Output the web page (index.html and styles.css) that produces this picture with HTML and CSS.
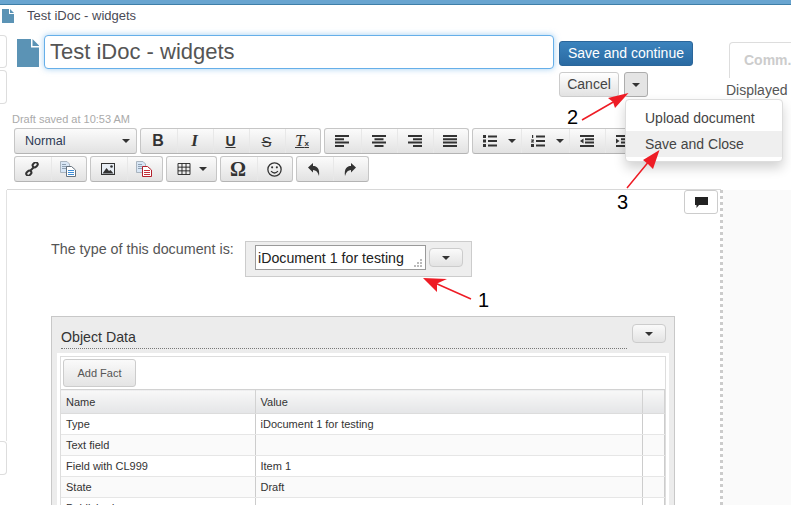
FILE: index.html
```html
<!DOCTYPE html>
<html>
  <head>
    <meta name="viewport" content="width=device-width, initial-scale=1.0">
    <title>Test iDoc - widgets</title>
    <link rel="stylesheet" href="styles.css">
  </head>
  <body>
    <div class="page">
      <div class="topbar"></div>
      <div class="titlebar">
        <svg class="doc-small" viewBox="0 0 12 14"><path d="M0 0H7V5H12V14H0Z"/><path d="M8 0L12 4H8Z"/></svg>
        <span>Test iDoc - widgets</span>
      </div>

      <div class="head">
        <div class="rail">
          <div class="rail-box"></div>
          <div class="rail-box"></div>
        </div>
        <div class="head-main">
          <div class="title-row">
            <svg class="doc-big" viewBox="0 0 22 28"><path d="M0 0H14V8.500H22V28H0Z"/><path d="M15.500 0L22 6.500V7H15.500Z"/></svg>
            <input class="title-input" type="text" value="Test iDoc - widgets">
            <div class="actions">
              <button class="btn btn-primary">Save and continue</button>
              <div class="actions-row">
                <button class="btn btn-cancel">Cancel</button>
                <button class="btn btn-caret"><i class="caret"></i></button>
              </div>
              <div class="menu">
                <a>Upload document</a>
                <a class="active">Save and Close</a>
              </div>
            </div>
          </div>
          <div class="draft">Draft saved at 10:53 AM</div>

          <div class="toolbar">
            <div class="group"><div class="tool tool-select"><span>Normal</span><i class="caret"></i></div></div>
            <div class="group">
              <div class="tool tb">B</div>
              <div class="tool ti">I</div>
              <div class="tool tu">U</div>
              <div class="tool ts">S</div>
              <div class="tool"><span class="tx">T<small>x</small></span></div>
            </div>
            <div class="group">
              <div class="tool"><svg class="ico" viewBox="0 0 14 12"><path d="M0 0H14V2H0ZM0 3.300H9V5.300H0ZM0 6.600H14V8.600H0ZM0 10H9V12H0Z"/></svg></div>
              <div class="tool"><svg class="ico" viewBox="0 0 14 12"><path d="M0 0H14V2H0ZM2.500 3.300H11.500V5.300H2.500ZM0 6.600H14V8.600H0ZM2.500 10H11.500V12H2.500Z"/></svg></div>
              <div class="tool"><svg class="ico" viewBox="0 0 14 12"><path d="M0 0H14V2H0ZM5 3.300H14V5.300H5ZM0 6.600H14V8.600H0ZM5 10H14V12H5Z"/></svg></div>
              <div class="tool"><svg class="ico" viewBox="0 0 14 12"><path d="M0 0H14V2H0ZM0 3.300H14V5.300H0ZM0 6.600H14V8.600H0ZM0 10H14V12H0Z"/></svg></div>
            </div>
            <div class="group">
              <div class="tool tool-wide"><svg class="ico" viewBox="0 0 14 12"><path d="M0 0H3V3H0ZM5 .5H14V2.500H5ZM0 4.500H3V7.500H0ZM5 5H14V7H5ZM0 9H3V12H0ZM5 9.500H14V11.500H5Z"/></svg><i class="caret"></i></div>
              <div class="tool tool-wide"><svg class="ico" viewBox="0 0 14 12"><path d="M1 0H2.200V3H1ZM0 4.500H3V5.500L1.500 6.500H3V7.500H0V6.700L1.500 5.500H0ZM0 9H3V12H0ZM5 .5H14V2.500H5ZM5 5H14V7H5ZM5 9.500H14V11.500H5Z"/></svg><i class="caret"></i></div>
              <div class="tool"><svg class="ico" viewBox="0 0 14 12"><path d="M0 0H14V2H0ZM5 3.300H14V5.300H5ZM5 6.600H14V8.600H5ZM0 10H14V12H0ZM3.500 3.500V8.500L0 6Z"/></svg></div>
              <div class="tool"><svg class="ico" viewBox="0 0 14 12"><path d="M0 0H14V2H0ZM5 3.300H14V5.300H5ZM5 6.600H14V8.600H5ZM0 10H14V12H0ZM0 3.500V8.500L3.500 6Z"/></svg></div>
              <div class="tool"></div>
            </div>
          </div>

          <div class="toolbar">
            <div class="group">
              <div class="tool"><svg class="ico ico-link" viewBox="0 0 14 14"><g fill="none" stroke="#333" stroke-width="2"><rect x="7.500" y="1" width="5.500" height="4" rx="2" transform="rotate(-45 10 3)"/><rect x="1" y="9" width="5.500" height="4" rx="2" transform="rotate(-45 4 11)"/><path d="M5.500 8.500L8.500 5.500"/></g></svg></div>
              <div class="tool"><svg class="ico ico-page" viewBox="0 0 16 16"><path d="M.5 .5H7L9.500 3V11.500H.5Z" fill="#d8e6f5" stroke="#a9b4bf"/><path d="M2 3.500H6M2 5.500H8M2 7.500H8" stroke="#8ea0b2"/><path d="M6.500 5.500H11.500L15.500 9V15.500H6.500Z" fill="#fff" stroke="#66727e"/><path d="M8 9.500H14M8 11.500H14M8 13.500H14" stroke="#3d8cd6"/></svg></div>
            </div>
            <div class="group">
              <div class="tool"><svg class="ico" viewBox="0 0 14 12"><path d="M0 0H14V12H0Z"/><path d="M1 1H13V11H1Z" fill="#e8eef5"/><path d="M1.500 10.500L5.500 5L8 8L9.500 7L12.500 10.500Z"/><circle cx="10.500" cy="3.500" r="1.300"/></svg></div>
              <div class="tool"><svg class="ico ico-page" viewBox="0 0 16 16"><path d="M.5 .5H7L9.500 3V11.500H.5Z" fill="#d8e6f5" stroke="#a9b4bf"/><path d="M2 3.500H6M2 5.500H8M2 7.500H8" stroke="#8ea0b2"/><path d="M6.500 5.500H11.500L15.500 9V15.500H6.500Z" fill="#fff" stroke="#b3202c"/><path d="M8 9.500H14M8 11.500H14M8 13.500H14" stroke="#c4303a"/></svg></div>
            </div>
            <div class="group">
              <div class="tool tool-table"><svg class="ico" viewBox="0 0 14 13"><path d="M.5 .5H13.500V12.500H.5ZM.5 4.500H13.500M.5 8.500H13.500M4.800 .5V12.500M9.200 .5V12.500" fill="none" stroke="#222"/></svg><i class="caret"></i></div>
            </div>
            <div class="group">
              <div class="tool tomega">&#937;</div>
              <div class="tool"><svg class="ico ico-smile" viewBox="0 0 14 14"><g fill="none" stroke="#333" stroke-width="1.200"><circle cx="7" cy="7" r="6.200"/><path d="M3.800 8.500Q7 12 10.200 8.500"/></g><circle cx="4.800" cy="5" r="1" fill="#333"/><circle cx="9.200" cy="5" r="1" fill="#333"/></svg></div>
            </div>
            <div class="group">
              <div class="tool"><svg class="ico ico-turn" viewBox="0 0 12 13"><path d="M0 4.500L5 0V3C9 3 12 5.500 11 13C10 9 8 7 5 7V9.500Z"/></svg></div>
              <div class="tool"><svg class="ico ico-turn" viewBox="0 0 12 13"><path d="M12 4.500L7 0V3C3 3 0 5.500 1 13C2 9 4 7 7 7V9.500Z"/></svg></div>
            </div>
          </div>
        </div>
        <div class="head-side">
          <div class="tab">Comm.</div>
          <div class="displayed">Displayed</div>
        </div>
      </div>

      <div class="body">
        <div class="rail rail-long"><div class="rail-box rail-box-low"></div></div>
        <div class="content">
          <div class="comment-row">
            <button class="btn-comment"><svg viewBox="0 0 13 11"><path d="M0 0H13V8H4L1.500 11V8H0Z" fill="#222"/></svg></button>
          </div>
          <div class="type-row">
            <div class="type-label">The type of this document is:</div>
            <div class="type-widget">
              <div class="type-value">iDocument 1 for testing<svg class="grip" viewBox="0 0 8 8"><path d="M6 0H8V2H6ZM3 3H5V5H3ZM6 3H8V5H6ZM0 6H2V8H0ZM3 6H5V8H3ZM6 6H8V8H6Z"/></svg></div>
              <button class="btn-small"><i class="caret"></i></button>
            </div>
          </div>

          <div class="panel">
            <div class="panel-head">
              <div class="panel-title">Object Data</div>
              <button class="btn-small"><i class="caret"></i></button>
            </div>
            <div class="panel-body">
              <div class="grid">
                <div class="grid-bar"><button class="btn-fact">Add Fact</button></div>
                <table>
                  <thead>
                    <tr><th class="col-name">Name</th><th>Value</th><th class="col-end"></th></tr>
                  </thead>
                  <tbody>
                    <tr><td>Type</td><td>iDocument 1 for testing</td><td></td></tr>
                    <tr><td>Text field</td><td></td><td></td></tr>
                    <tr><td>Field with CL999</td><td>Item 1</td><td></td></tr>
                    <tr><td>State</td><td>Draft</td><td></td></tr>
                    <tr><td>Published</td><td></td><td></td></tr>
                  </tbody>
                </table>
              </div>
            </div>
          </div>
        </div>
        <div class="divider"></div>
        <div class="side"></div>
      </div>

      <svg class="arrows" viewBox="0 0 791 505">
        <path d="M582 120L615 101M627 188L650 160M471 299L435 283" fill="none" stroke="#ee1c25" stroke-width="1.500"/>
        <path d="M628.500 93L608 98L613 102L615 108Z"/>
        <path d="M659.500 150L643 160L648 164L653 169Z"/>
        <path d="M423 278L447 279L437 283.500L437 292Z"/>
      </svg>
      <span class="note note-1">1</span>
      <span class="note note-2">2</span>
      <span class="note note-3">3</span>
    </div>
  </body>
</html>
```

FILE: styles.css
```css
* {
  box-sizing: border-box;
}

html, body {
  margin: 0;
  height: 100%;
  overflow: hidden;
}

body {
  background-color: #fff;
  color: #555;
  font-family: "Liberation Sans", Arial, sans-serif;
  font-size: 13px;
}

.page {
  position: relative;
  width: 791px;
  height: 505px;
  overflow: hidden;
}

.topbar {
  height: 5px;
  background-color: #69a5d0;
  border-bottom: 1px solid #3f7fa8;
}

.titlebar {
  display: flex;
  align-items: center;
  height: 24px;
  padding: 0 0 3px 2px;
  color: #4a4a55;
}

.doc-small {
  width: 12px;
  height: 14px;
  margin-right: 13px;
  fill: #5b93b5;
}

/* Head: title, buttons and toolbars */
.head {
  display: flex;
  height: 161px;
}

.rail {
  flex: none;
  width: 7px;
}

.rail-box {
  height: 33px;
  margin-top: 6px;
  border: 1px solid #ddd;
  border-left: none;
  border-radius: 0 4px 4px 0;
}

.rail-box + .rail-box {
  height: 34px;
  margin-top: 2px;
}

.head-main {
  flex: none;
  width: 714px;
  padding-top: 6px;
  border-bottom: 1px solid #d8d8d8;
}

.title-row {
  display: flex;
  align-items: flex-start;
  height: 62px;
  padding-left: 10px;
}

.doc-big {
  flex: none;
  width: 22px;
  height: 28px;
  margin: 4px 5px 0 0;
  fill: #5b93b5;
}

.title-input {
  flex: none;
  width: 510px;
  height: 34px;
  padding: 0 5px;
  color: #555;
  font-family: inherit;
  font-size: 22px;
  border: 1px solid #66afe9;
  border-radius: 4px;
  box-shadow: 0 0 6px rgba(102, 175, 233, 0.6);
  outline: none;
}

.actions {
  position: relative;
  flex: none;
  margin: 6px 0 0 5px;
}

.btn {
  height: 25px;
  padding: 0 0 2px;
  color: #444;
  font-family: inherit;
  font-size: 14px;
  border: 1px solid #ccc;
  border-radius: 3px;
  background: linear-gradient(#fff, #e2e2e2);
}

.btn-primary {
  display: block;
  width: 134px;
  color: #fff;
  border-color: #2b669a;
  background: linear-gradient(#3b83bd, #2a6aa2);
}

.actions-row {
  display: flex;
  gap: 5px;
  margin-top: 6px;
}

.btn-cancel {
  width: 60px;
}

.btn-caret {
  width: 24px;
  border-color: #adadad;
  background: #e4e4e4;
}

.caret {
  display: inline-block;
  width: 0;
  height: 0;
  border-top: 4px solid #333;
  border-left: 4px solid transparent;
  border-right: 4px solid transparent;
  vertical-align: middle;
}

.menu {
  position: absolute;
  z-index: 2;
  left: 66px;
  top: 58px;
  width: 158px;
  padding: 5px 0 4px;
  background-color: #fff;
  border: 1px solid #ddd;
  border-radius: 4px;
  box-shadow: 0 6px 12px rgba(0, 0, 0, 0.18);
  font-size: 14px;
  color: #444;
}

.menu a {
  display: block;
  height: 26px;
  padding: 0 19px;
  line-height: 26px;
}

.menu a.active {
  background-color: #efefef;
}

.draft {
  height: 31px;
  padding: 16px 0 0 5px;
  color: #aaa;
  font-size: 11px;
  line-height: 12px;
}

/* Editor toolbar */
.toolbar {
  display: flex;
  gap: 3px;
  height: 26px;
  margin: 0 0 2px 7px;
}

.group {
  display: flex;
  flex: none;
  height: 26px;
  border: 1px solid #c6c6c6;
  border-bottom-color: #b4b4b4;
  border-radius: 3px;
  background: linear-gradient(#fbfbfb, #e2e2e2);
}

.tool {
  display: flex;
  align-items: center;
  justify-content: center;
  width: 36px;
  padding-right: 2px;
  color: #333;
  border-left: 1px solid #e8e8e8;
}

.tool:first-child {
  border-left: none;
}

.tool:last-child {
  width: 35px;
}

.group .tool-select {
  justify-content: space-between;
  width: 121px;
  padding: 0 6px 0 10px;
  color: #2d3a55;
  font-size: 12.600px;
}

.tool-wide {
  gap: 11px;
  width: 48px;
  padding: 0 0 0 4px;
}

.group .tool-table {
  gap: 8px;
  width: 49px;
  padding: 0;
}

.ico {
  width: 14px;
  height: 12px;
  fill: #333;
}

.ico-page {
  width: 16px;
  height: 16px;
}

.ico-link {
  height: 14px;
}

.ico-smile {
  width: 15px;
  height: 15px;
}

.ico-turn {
  width: 12px;
  height: 13px;
}

.tb {
  font: bold 16px "Liberation Sans", sans-serif;
}

.ti {
  font: italic bold 17px "Liberation Serif", serif;
}

.tu {
  font-size: 14px;
  font-weight: bold;
  text-decoration: underline;
}

.ts {
  font-size: 15px;
  text-decoration: line-through;
}

.tx {
  font: italic 17px "Liberation Serif", serif;
  text-decoration: underline;
}

.tx small {
  font: bold 8px "Liberation Sans", sans-serif;
}

.tomega {
  font: bold 20px "Liberation Serif", serif;
}

/* Body: document area and side panel */
.body {
  display: flex;
  height: 315px;
}

.rail-long {
  height: 251px;
  border-right: 1px solid #e2e2e2;
}

.rail-box-low {
  width: 7px;
  height: 34px;
  margin-top: 251px;
}

.content {
  flex: none;
  width: 713px;
}

.divider {
  flex: none;
  width: 3px;
  border-left: 3px dotted #ccc;
}

.side {
  flex: 1;
  background-color: #fafafa;
}

.head-side {
  flex: 1;
  padding: 13px 0 0 5px;
  overflow: hidden;
}

.tab {
  width: 70px;
  height: 36px;
  margin-left: 3px;
  padding: 9px 0 0 14px;
  color: #ccc;
  font-size: 14px;
  font-weight: bold;
  border: 1px solid #ddd;
  border-bottom: none;
  border-radius: 4px 4px 0 0;
}

.displayed {
  padding-top: 4px;
  color: #555;
  font-size: 14px;
  white-space: nowrap;
}

.comment-row {
  display: flex;
  justify-content: flex-end;
  height: 51px;
  padding: 0 2px 0 0;
}

.btn-comment {
  display: flex;
  align-items: center;
  justify-content: center;
  width: 34px;
  height: 24px;
  background-color: #fff;
  border: 1px solid #ccc;
  border-radius: 3px;
}

.btn-comment svg {
  width: 13px;
  height: 11px;
}

.type-row {
  display: flex;
  height: 75px;
  padding-left: 44px;
}

.type-label {
  width: 194px;
  padding-top: 1px;
  font-size: 14.300px;
  line-height: 15px;
}

.type-widget {
  display: flex;
  align-items: flex-start;
  width: 227px;
  height: 36px;
  padding: 3px 0 0 9px;
  background-color: #eee;
  border: 1px solid #ccc;
}

.type-value {
  position: relative;
  width: 171px;
  height: 25px;
  padding: 4px 2px;
  color: #222;
  font-size: 14.200px;
  line-height: 16px;
  background-color: #fff;
  border: 1px solid #999;
}

.grip {
  position: absolute;
  right: 3px;
  bottom: 2px;
  width: 8px;
  height: 8px;
  fill: #bbb;
}

.btn-small {
  width: 34px;
  height: 19px;
  margin: 3px 0 0 3px;
  padding: 0;
  border: 1px solid #ccc;
  border-radius: 4px;
  background: linear-gradient(#fafafa, #e3e3e3);
}

.panel {
  width: 624px;
  height: 260px;
  margin-left: 44px;
  padding: 0 5px;
  background-color: #ececec;
  border: 1px solid #c8c8c8;
}

.panel-head {
  display: flex;
  justify-content: space-between;
  height: 36px;
  padding: 7px 3px 0 4px;
}

.panel-title {
  width: 566px;
  height: 25px;
  color: #333;
  font-size: 14.200px;
  line-height: 26px;
  border-bottom: 1px dotted #777;
}

.panel-head .btn-small {
  margin: 0;
}

.panel-body {
  height: 220px;
  padding: 3px;
  background-color: #fff;
}

.grid {
  height: 220px;
  border: 1px solid #ddd;
}

.grid-bar {
  height: 32px;
  padding: 2px;
}

.btn-fact {
  width: 73px;
  height: 28px;
  padding: 0;
  color: #555;
  font-family: inherit;
  font-size: 11px;
  border: 1px solid #ccc;
  border-radius: 3px;
  background: linear-gradient(#fafafa, #e4e4e4);
}

table {
  width: 604px;
  border-collapse: collapse;
  table-layout: fixed;
  font-size: 11px;
  color: #333;
}

th {
  height: 24px;
  padding: 0 5px;
  font-weight: normal;
  text-align: left;
  background: linear-gradient(#f8f8f8, #e4e5e7);
  border: 1px solid #d2d2d2;
  border-bottom-color: #dcdcdc;
}

th:first-child,
td:first-child {
  border-left: none;
}

.col-name {
  width: 194px;
}

.col-end {
  width: 22px;
}

td {
  height: 21px;
  padding: 0 5px;
  border-bottom: 1px solid #e6e6e6;
  border-left: 1px solid #ccc;
  border-right: 1px solid #ccc;
}

tr:nth-child(even) td {
  background-color: #fafafa;
}

/* Annotations drawn over the screenshot */
.arrows {
  position: absolute;
  z-index: 3;
  left: 0;
  top: 0;
  width: 791px;
  height: 505px;
  fill: #ee1c25;
  pointer-events: none;
}

.note {
  position: absolute;
  z-index: 3;
  color: #000;
  font-size: 20px;
  line-height: 20px;
}

.note-1 {
  left: 478px;
  top: 290px;
}

.note-2 {
  left: 567px;
  top: 107px;
}

.note-3 {
  left: 617px;
  top: 192px;
}
```
